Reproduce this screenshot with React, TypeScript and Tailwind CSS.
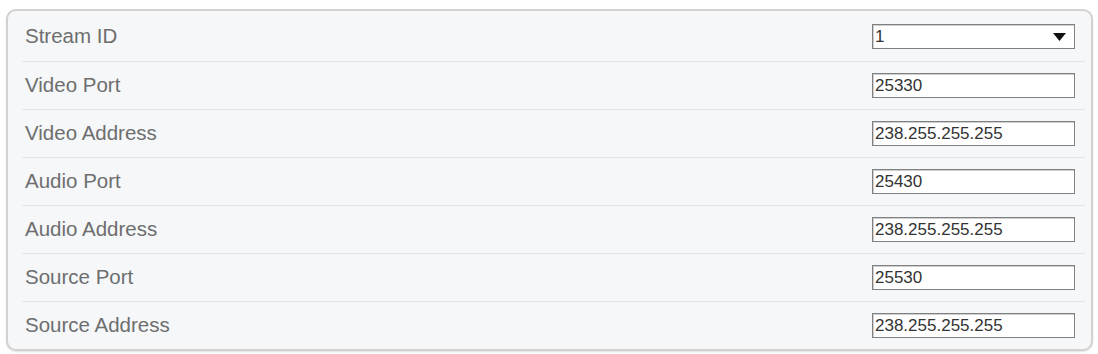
import React from "react";

const rows: { label: string; value: string; select?: boolean }[] = [
  { label: "Stream ID", value: "1", select: true },
  { label: "Video Port", value: "25330" },
  { label: "Video Address", value: "238.255.255.255" },
  { label: "Audio Port", value: "25430" },
  { label: "Audio Address", value: "238.255.255.255" },
  { label: "Source Port", value: "25530" },
  { label: "Source Address", value: "238.255.255.255" },
];

export default function App() {
  return (
    <div
      className="w-[1098px] h-[354px] bg-white pt-[9px] pl-[6px]"
      style={{ fontFamily: '"Liberation Sans", Arial, sans-serif' }}
    >
      <div className="w-[1087px] border-2 border-[#d2d2d2] rounded-[10px] bg-[#f5f7f9] pl-[14px] pr-[6px] pt-[1px] shadow-[0_1px_2px_rgba(0,0,0,0.12)]">
        {rows.map((r, i) => (
          <div
            key={r.label}
            className={
              i === 0
                ? "flex items-center justify-between h-[49px] pl-[3px] pr-[10px]"
                : "flex items-center justify-between h-[48px] pl-[3px] pr-[10px] border-t border-[#e2e5e9]"
            }
          >
            <span className="text-[20.5px] text-[#6e6e6e] leading-none">{r.label}</span>
            <div className="relative w-[203px] h-[25px] bg-white border border-[#808080] shadow-[inset_1px_1px_0_#cfcfcf] flex items-center pl-[2px]">
              <span className="text-[17px] text-[#333] leading-none">{r.value}</span>
              {r.select && (
                <svg
                  className="absolute right-[8px] top-[8px]"
                  width="13"
                  height="8"
                  viewBox="0 0 13 8"
                >
                  <polygon points="0,0 13,0 6.5,8" fill="#111" />
                </svg>
              )}
            </div>
          </div>
        ))}
      </div>
    </div>
  );
}
